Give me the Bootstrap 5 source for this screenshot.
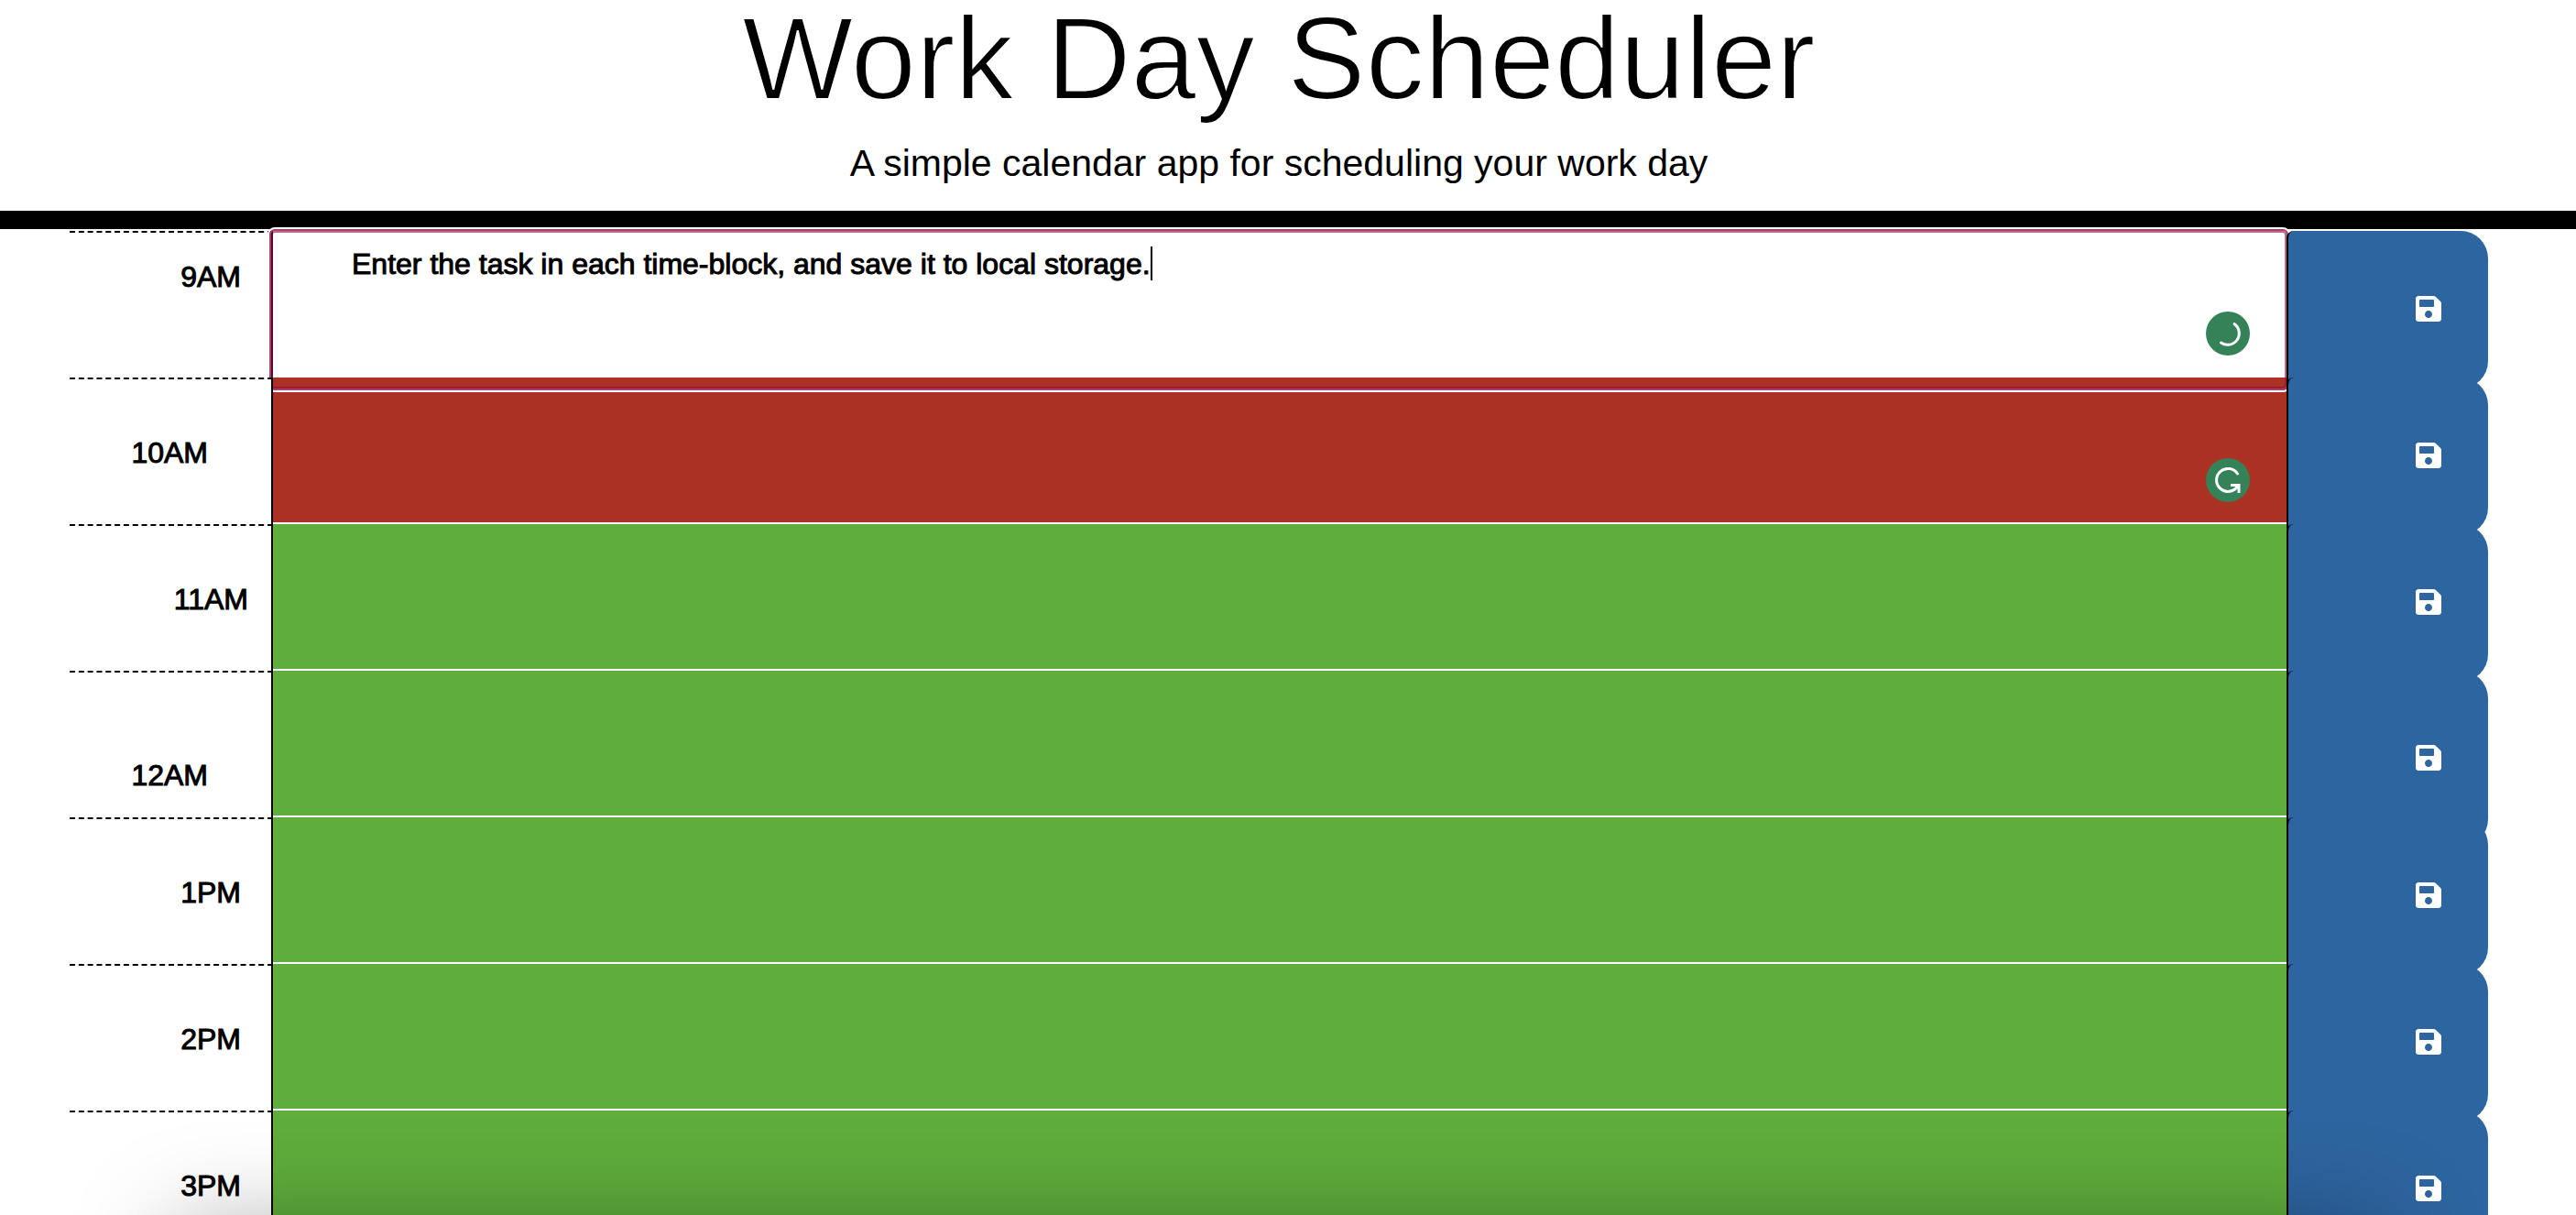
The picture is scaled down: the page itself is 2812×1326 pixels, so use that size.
<!DOCTYPE html>
<html lang="en">
<head>
<meta charset="utf-8">
<meta name="viewport" content="width=device-width, initial-scale=1">
<title>Work Day Scheduler</title>
<link href="https://cdn.jsdelivr.net/npm/bootstrap@5.3.0/dist/css/bootstrap.min.css" rel="stylesheet">
<style>
  body { font-family: "Liberation Sans", Arial, sans-serif; font-size: 32px; line-height: 36px; color: #000; background: #fff; }
  .masthead { border-bottom: 20px solid #000; padding: 0 20px 28px 0; }
  .masthead h1 { font-size: 128px; line-height: 128px; font-weight: 300; margin-bottom: 26px; -webkit-text-stroke: 2px #fff; }
  .masthead p { font-size: 41px; line-height: 48px; margin-bottom: 0; }
  .planner { padding: 2px 96px 0 76px; }
  .time-block { height: 160px; }
  .hour, .task { -webkit-text-stroke: 1px #000; }
  .hour { position: relative; z-index: 2; display: block; height: 160px; margin-right: -2px; padding: 62px 33px 0 0; text-align: right; background: #fff; border-top: 2px dashed #000; border-right: 2px solid #000; }
  .hour-top { padding-top: 30px; }
  .hour-low { padding-top: 94px; }
  .hour-left { padding-right: 69px; }
  .hour-near { padding-right: 25px; }
  .is-active .hour { z-index: 0; }
  .task { display: block; width: 100%; height: 160px; padding: 18px 86px; border: 0; border-left: 2px solid #000; border-bottom: 2px solid #fff; border-radius: 0; resize: none; overflow: hidden; outline: 0; color: #000; }
  .task.past { background: #fff; border-bottom: 0; }
  .present { background: #aa3123; }
  .future { background: #5fad3c; }
  .focus-frame { z-index: 1; top: -2px; left: -2px; right: -2px; height: 176px; pointer-events: none; border: 2px solid #a6426f; border-radius: 6px; box-shadow: inset 0 0 0 2px rgba(146, 14, 62, .62), 0 0 0 2px #fff; }
  .caret-bar { top: 17px; left: 960px; width: 2px; height: 37px; background: #000; }
  .assist { top: 88px; right: 40px; width: 48px; height: 48px; }
  .save { position: relative; z-index: 2; display: flex; align-items: center; justify-content: flex-end; width: 100%; height: 172px; padding: 0 51px 2px 0; color: #fff; background: #2d65a0; border: 0; border-left: 2px solid #000; border-radius: 8px 30px 30px 8px; }
  .save-tall { height: 192px; }
  .save svg { width: 28px; height: 32px; }
  .dock-shade { z-index: 5; top: 100%; left: 190px; right: 210px; height: 200px; margin-top: 16px; pointer-events: none; box-shadow: 0 0 110px rgba(0, 0, 0, .34); }
</style>
<script src="https://cdn.jsdelivr.net/npm/bootstrap@5.3.0/dist/js/bootstrap.bundle.min.js"></script>
</head>
<body class="vh-100 overflow-hidden">
<svg class="d-none" aria-hidden="true">
  <symbol id="disk" viewBox="0 0 448 512"><path fill="currentColor" d="M433.941 129.941l-83.882-83.882A48 48 0 0 0 316.118 32H48C21.49 32 0 53.49 0 80v352c0 26.51 21.49 48 48 48h352c26.51 0 48-21.49 48-48V163.882a48 48 0 0 0-14.059-33.941zM224 416c-35.346 0-64-28.654-64-64 0-35.346 28.654-64 64-64s64 28.654 64 64c0 35.346-28.654 64-64 64zm96-304.52V212c0 6.627-5.373 12-12 12H76c-6.627 0-12-5.373-12-12V108c0-6.627 5.373-12 12-12h228.52c3.183 0 6.235 1.264 8.485 3.515l3.48 3.48A11.996 11.996 0 0 1 320 111.48z"/></symbol>
</svg>

<header class="masthead text-center">
  <h1>Work Day Scheduler</h1>
  <p>A simple calendar app for scheduling your work day</p>
</header>

<main class="planner">
  <div class="row g-0 time-block is-active">
    <div class="col-1"><label class="hour hour-top" for="task-9">9AM</label></div>
    <div class="col-10 position-relative">
      <textarea class="task past" id="task-9" spellcheck="false">Enter the task in each time-block, and save it to local storage.</textarea>
      <span class="caret-bar position-absolute"></span>
      <svg class="assist position-absolute" viewBox="0 0 48 48" aria-hidden="true"><circle cx="24" cy="24" r="24" fill="#358258"/><path d="M31 13.500A12.500 12.500 0 0 1 16.500 34" fill="none" stroke="#fff" stroke-width="3" stroke-linecap="round"/></svg>
      <div class="focus-frame position-absolute"></div>
    </div>
    <div class="col-1"><button class="save" type="button" aria-label="Save 9AM"><svg><use href="#disk"/></svg></button></div>
  </div>
  <div class="row g-0 time-block">
    <div class="col-1"><label class="hour hour-left" for="task-10">10AM</label></div>
    <div class="col-10 position-relative">
      <textarea class="task present" id="task-10"></textarea>
      <svg class="assist position-absolute" viewBox="0 0 48 48" aria-hidden="true"><circle cx="24" cy="24" r="24" fill="#358258"/><path d="M34.500 17A12.500 12.500 0 1 0 34 31.500" fill="none" stroke="#fff" stroke-width="3" stroke-linecap="round"/><path d="M27 29.500H36V38" fill="none" stroke="#fff" stroke-width="3"/></svg>
    </div>
    <div class="col-1"><button class="save" type="button" aria-label="Save 10AM"><svg><use href="#disk"/></svg></button></div>
  </div>
  <div class="row g-0 time-block">
    <div class="col-1"><label class="hour hour-near" for="task-11">11AM</label></div>
    <div class="col-10"><textarea class="task future" id="task-11"></textarea></div>
    <div class="col-1"><button class="save" type="button" aria-label="Save 11AM"><svg><use href="#disk"/></svg></button></div>
  </div>
  <div class="row g-0 time-block">
    <div class="col-1"><label class="hour hour-left hour-low" for="task-12">12AM</label></div>
    <div class="col-10"><textarea class="task future" id="task-12"></textarea></div>
    <div class="col-1"><button class="save save-tall" type="button" aria-label="Save 12AM"><svg><use href="#disk"/></svg></button></div>
  </div>
  <div class="row g-0 time-block">
    <div class="col-1"><label class="hour" for="task-13">1PM</label></div>
    <div class="col-10"><textarea class="task future" id="task-13"></textarea></div>
    <div class="col-1"><button class="save" type="button" aria-label="Save 1PM"><svg><use href="#disk"/></svg></button></div>
  </div>
  <div class="row g-0 time-block">
    <div class="col-1"><label class="hour" for="task-14">2PM</label></div>
    <div class="col-10"><textarea class="task future" id="task-14"></textarea></div>
    <div class="col-1"><button class="save" type="button" aria-label="Save 2PM"><svg><use href="#disk"/></svg></button></div>
  </div>
  <div class="row g-0 time-block">
    <div class="col-1"><label class="hour" for="task-15">3PM</label></div>
    <div class="col-10"><textarea class="task future" id="task-15"></textarea></div>
    <div class="col-1"><button class="save" type="button" aria-label="Save 3PM"><svg><use href="#disk"/></svg></button></div>
  </div>
</main>
<div class="dock-shade position-fixed"></div>
</body>
</html>
